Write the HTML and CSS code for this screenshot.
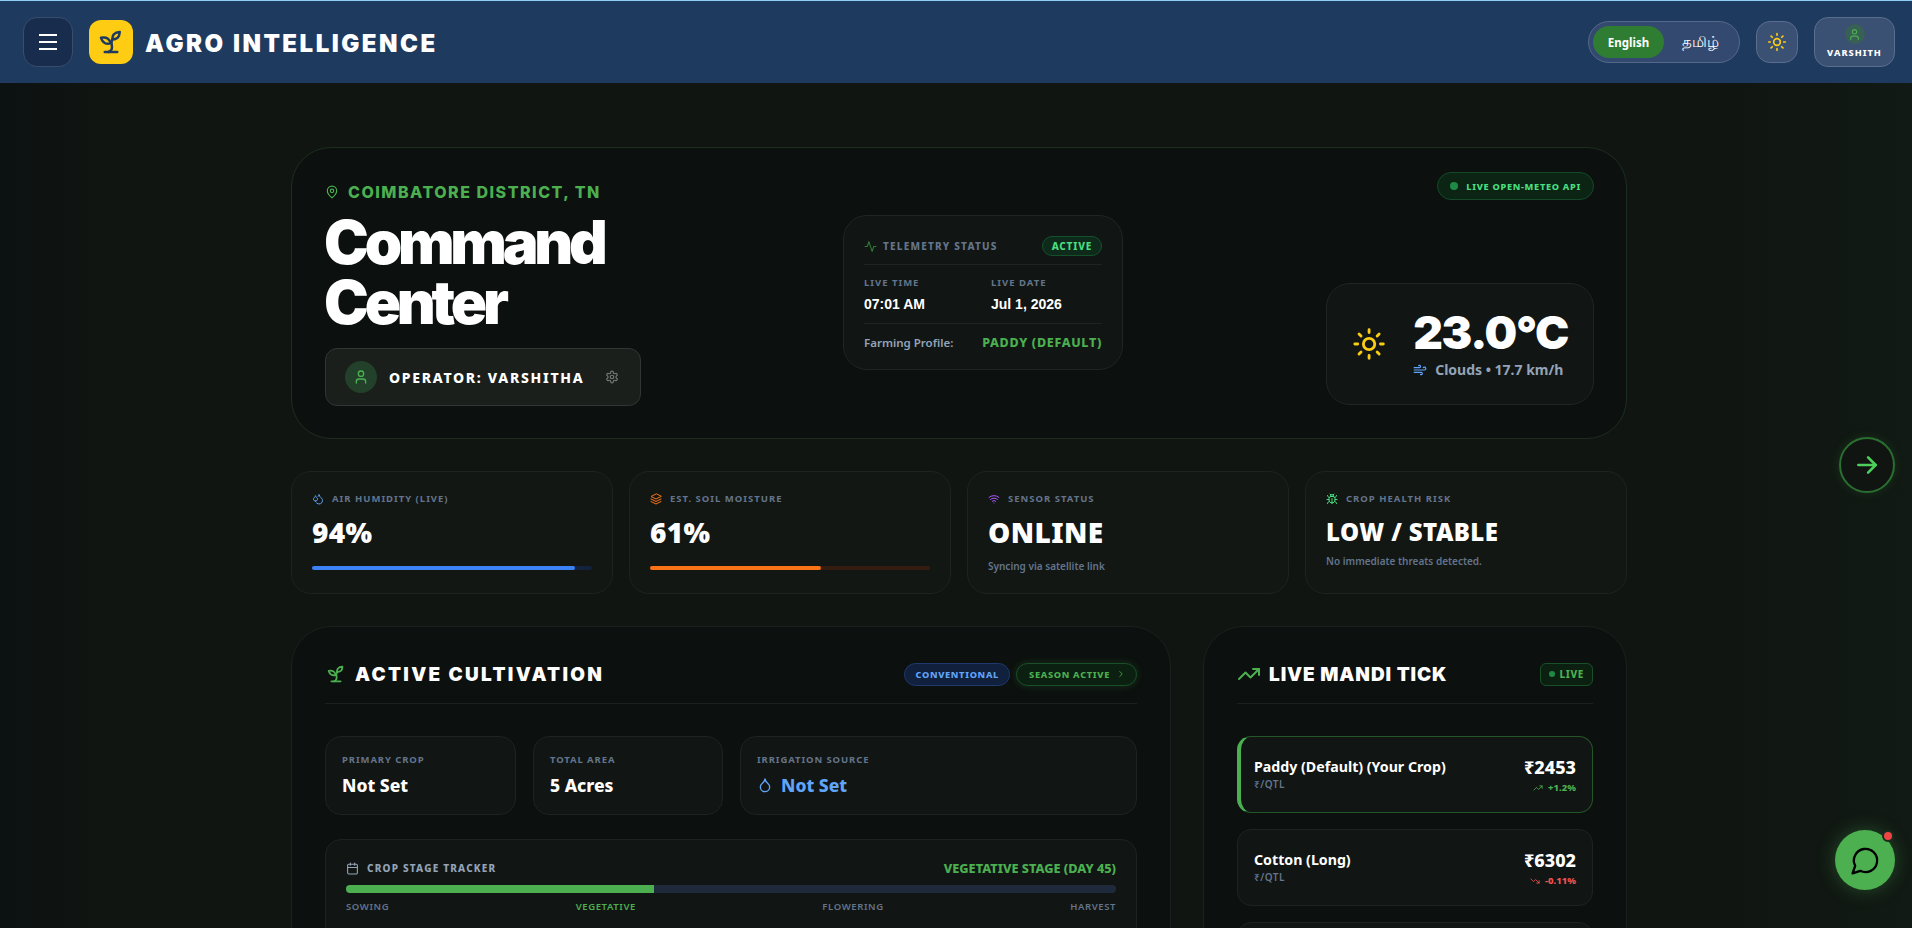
FILE: index.html
```html
<!DOCTYPE html>
<html>
<head>
  <meta charset="utf-8">
  <title>Agro Intelligence</title>
  <link rel="stylesheet" href="styles.css">
</head>
<body>
  <header class="topbar">
    <div class="brand">
      <button class="menu-btn">
        <svg width="24" height="24" viewBox="0 0 24 24" fill="none" stroke="#fff" stroke-width="2"><path d="M3 5h18M3 12h18M3 19h18"/></svg>
      </button>
      <div class="logo">
        <svg width="30" height="30" viewBox="0 0 24 24" fill="none" stroke="#1e3a5f" stroke-width="2" stroke-linecap="round" stroke-linejoin="round"><path d="M7 20h10"/><path d="M10 20c5.5-2.5.8-6.4 3-10"/><path d="M9.5 9.4c1.1.8 1.8 2.2 2.3 3.7-2 .4-3.5.4-4.8-.3-1.2-.6-2.3-1.9-3-4.2 2.8-.5 4.4 0 5.5.8z"/><path d="M14.1 6a7 7 0 0 0-1.1 4c1.9-.1 3.3-.6 4.3-1.4 1-1 1.6-2.3 1.7-4.6-2.7.1-4 1-4.9 2z"/></svg>
      </div>
      <span class="brand-name">AGRO INTELLIGENCE</span>
    </div>
    <div class="top-actions">
      <div class="lang-toggle">
        <span class="lang-item lang-on">English</span>
        <span class="lang-item lang-ta">தமிழ்</span>
      </div>
      <button class="theme-btn">
        <svg width="20" height="20" viewBox="0 0 24 24" fill="none" stroke="#facc15" stroke-width="2" stroke-linecap="round"><circle cx="12" cy="12" r="4"/><path d="M12 2v2M12 20v2M4.93 4.93l1.41 1.41M17.66 17.66l1.41 1.41M2 12h2M20 12h2M6.34 17.66l-1.41 1.41M19.07 4.93l-1.41 1.41"/></svg>
      </button>
      <div class="profile">
        <span class="profile-avatar">
          <svg width="13" height="13" viewBox="0 0 24 24" fill="none" stroke="#4caf50" stroke-width="2" stroke-linecap="round"><path d="M19 21v-2a4 4 0 0 0-4-4H9a4 4 0 0 0-4 4v2"/><circle cx="12" cy="7" r="4"/></svg>
        </span>
        <span class="profile-name">VARSHITH</span>
      </div>
    </div>
  </header>

  <main class="page">
    <section class="hero">
      <div class="hero-left">
        <div class="district">
          <svg width="14" height="16" viewBox="0 0 24 24" fill="none" stroke="#4caf50" stroke-width="2"><path d="M20 10c0 6-8 12-8 12s-8-6-8-12a8 8 0 0 1 16 0z"/><circle cx="12" cy="10" r="3"/></svg>
          COIMBATORE DISTRICT, TN
        </div>
        <h1 class="hero-title">Command<br>Center</h1>
        <div class="operator">
          <span class="operator-avatar">
            <svg width="16" height="16" viewBox="0 0 24 24" fill="none" stroke="#4caf50" stroke-width="2" stroke-linecap="round"><path d="M19 21v-2a4 4 0 0 0-4-4H9a4 4 0 0 0-4 4v2"/><circle cx="12" cy="7" r="4"/></svg>
          </span>
          <span class="operator-name">OPERATOR: VARSHITHA</span>
          <svg width="14" height="14" viewBox="0 0 24 24" fill="none" stroke="#777" stroke-width="2" stroke-linecap="round" stroke-linejoin="round"><path d="M12.22 2h-.44a2 2 0 0 0-2 2v.18a2 2 0 0 1-1 1.73l-.43.25a2 2 0 0 1-2 0l-.15-.08a2 2 0 0 0-2.73.73l-.22.38a2 2 0 0 0 .73 2.73l.15.1a2 2 0 0 1 1 1.72v.51a2 2 0 0 1-1 1.74l-.15.09a2 2 0 0 0-.73 2.73l.22.38a2 2 0 0 0 2.73.73l.15-.08a2 2 0 0 1 2 0l.43.25a2 2 0 0 1 1 1.73V20a2 2 0 0 0 2 2h.44a2 2 0 0 0 2-2v-.18a2 2 0 0 1 1-1.73l.43-.25a2 2 0 0 1 2 0l.15.08a2 2 0 0 0 2.73-.73l.22-.39a2 2 0 0 0-.73-2.73l-.15-.08a2 2 0 0 1-1-1.74v-.5a2 2 0 0 1 1-1.74l.15-.09a2 2 0 0 0 .73-2.73l-.22-.38a2 2 0 0 0-2.73-.73l-.15.08a2 2 0 0 1-2 0l-.43-.25a2 2 0 0 1-1-1.73V4a2 2 0 0 0-2-2z"/><circle cx="12" cy="12" r="3"/></svg>
        </div>
      </div>

      <div class="telemetry">
        <div class="tele-head">
          <span class="tele-title">
            <svg width="13" height="13" viewBox="0 0 24 24" fill="none" stroke="#2e7d32" stroke-width="2" stroke-linecap="round" stroke-linejoin="round"><path d="M22 12h-4l-3 9L9 3l-3 9H2"/></svg>
            TELEMETRY STATUS
          </span>
          <span class="tele-active">ACTIVE</span>
        </div>
        <div class="tele-times">
          <div>
            <div class="tele-label">LIVE TIME</div>
            <div class="tele-value">07:01 AM</div>
          </div>
          <div>
            <div class="tele-label">LIVE DATE</div>
            <div class="tele-value">Jul 1, 2026</div>
          </div>
        </div>
        <div class="tele-foot">
          <span class="tele-profile">Farming Profile:</span>
          <span class="tele-crop">PADDY (DEFAULT)</span>
        </div>
      </div>

      <div class="hero-right">
        <div class="api-pill"><span class="api-dot"></span>LIVE OPEN-METEO API</div>
        <div class="weather">
          <svg width="38" height="38" viewBox="0 0 24 24" fill="none" stroke="#facc15" stroke-width="2" stroke-linecap="round"><circle cx="12" cy="12" r="4"/><path d="M12 2v2M12 20v2M4.93 4.93l1.41 1.41M17.66 17.66l1.41 1.41M2 12h2M20 12h2M6.34 17.66l-1.41 1.41M19.07 4.93l-1.41 1.41"/></svg>
          <div>
            <div class="weather-temp">23.0°C</div>
            <div class="weather-sub">
              <svg width="14" height="14" viewBox="0 0 24 24" fill="none" stroke="#60a5fa" stroke-width="2" stroke-linecap="round"><path d="M12.8 19.6A2 2 0 1 0 14 16H2"/><path d="M17.5 8a2.5 2.5 0 1 1 2 4H2"/><path d="M9.8 4.4A2 2 0 1 1 11 8H2"/></svg>
              Clouds • 17.7 km/h
            </div>
          </div>
        </div>
      </div>
    </section>

    <section class="stats">
      <div class="stat">
        <div class="stat-label">
          <svg width="12" height="12" viewBox="0 0 24 24" fill="none" stroke="#60a5fa" stroke-width="2" stroke-linecap="round" stroke-linejoin="round"><path d="M7 16.3c2.2 0 4-1.83 4-4.05 0-1.16-.57-2.26-1.71-3.19S7.29 6.75 7 5.3c-.29 1.45-1.14 2.84-2.29 3.76S3 11.1 3 12.25c0 2.22 1.8 4.05 4 4.05z"/><path d="M12.56 6.6A11 11 0 0 0 14 3.02c.5 2.5 2 4.9 4 6.5s3 3.5 3 5.5a6.98 6.98 0 0 1-11.91 4.97"/></svg>
          AIR HUMIDITY (LIVE)
        </div>
        <div class="stat-value">94%</div>
        <div class="bar bar-blue"><div class="bar-fill" style="width:94%"></div></div>
      </div>
      <div class="stat">
        <div class="stat-label">
          <svg width="12" height="12" viewBox="0 0 24 24" fill="none" stroke="#f97316" stroke-width="2" stroke-linecap="round" stroke-linejoin="round"><path d="M12 2 2 7l10 5 10-5z"/><path d="m2 12 10 5 10-5"/><path d="m2 17 10 5 10-5"/></svg>
          EST. SOIL MOISTURE
        </div>
        <div class="stat-value">61%</div>
        <div class="bar bar-orange"><div class="bar-fill" style="width:61%"></div></div>
      </div>
      <div class="stat">
        <div class="stat-label">
          <svg width="12" height="12" viewBox="0 0 24 24" fill="none" stroke="#a855f7" stroke-width="2" stroke-linecap="round"><path d="M12 20h.01"/><path d="M2 8.82a15 15 0 0 1 20 0"/><path d="M5 12.86a10 10 0 0 1 14 0"/><path d="M8.5 16.43a5 5 0 0 1 7 0"/></svg>
          SENSOR STATUS
        </div>
        <div class="stat-value">ONLINE</div>
        <div class="stat-note">Syncing via satellite link</div>
      </div>
      <div class="stat">
        <div class="stat-label">
          <svg width="12" height="12" viewBox="0 0 24 24" fill="none" stroke="#4ade80" stroke-width="2" stroke-linecap="round" stroke-linejoin="round"><path d="m8 2 1.88 1.88M14.12 3.88 16 2"/><path d="M9 7.13v-1a3 3 0 1 1 6 0v1"/><path d="M12 20c-3.3 0-6-2.7-6-6v-3a4 4 0 0 1 4-4h4a4 4 0 0 1 4 4v3c0 3.3-2.7 6-6 6z"/><path d="M12 20v-9M6.53 9C4.6 8.8 3 7.1 3 5M6 13H2M3 21c0-2.1 1.7-3.9 3.8-4M20.97 5c0 2.1-1.6 3.8-3.5 4M22 13h-4M17.2 17c2.1.1 3.8 1.9 3.8 4"/></svg>
          CROP HEALTH RISK
        </div>
        <div class="stat-value stat-value-sm">LOW / STABLE</div>
        <div class="stat-note stat-note-up">No immediate threats detected.</div>
      </div>
    </section>

    <section class="columns">
      <div class="panel">
        <div class="panel-head">
          <h2 class="panel-title panel-title-wide">
            <svg width="22" height="26" viewBox="0 0 24 24" fill="none" stroke="#4caf50" stroke-width="2" stroke-linecap="round" stroke-linejoin="round"><path d="M7 20h10"/><path d="M10 20c5.5-2.5.8-6.4 3-10"/><path d="M9.5 9.4c1.1.8 1.8 2.2 2.3 3.7-2 .4-3.5.4-4.8-.3-1.2-.6-2.3-1.9-3-4.2 2.8-.5 4.4 0 5.5.8z"/><path d="M14.1 6a7 7 0 0 0-1.1 4c1.9-.1 3.3-.6 4.3-1.4 1-1 1.6-2.3 1.7-4.6-2.7.1-4 1-4.9 2z"/></svg>
            ACTIVE CULTIVATION
          </h2>
          <div class="panel-tags">
            <span class="tag tag-blue">CONVENTIONAL</span>
            <span class="tag tag-green">SEASON ACTIVE
              <svg width="10" height="10" viewBox="0 0 24 24" fill="none" stroke="#4caf50" stroke-width="2" stroke-linecap="round"><path d="m9 18 6-6-6-6"/></svg>
            </span>
          </div>
        </div>

        <div class="facts">
          <div class="fact">
            <div class="fact-label">PRIMARY CROP</div>
            <div class="fact-value">Not Set</div>
          </div>
          <div class="fact">
            <div class="fact-label">TOTAL AREA</div>
            <div class="fact-value">5 Acres</div>
          </div>
          <div class="fact">
            <div class="fact-label">IRRIGATION SOURCE</div>
            <div class="fact-value fact-blue">
              <svg width="16" height="16" viewBox="0 0 24 24" fill="none" stroke="#60a5fa" stroke-width="2" stroke-linejoin="round"><path d="M12 22a7 7 0 0 0 7-7c0-2-1-3.9-3-5.5s-3.5-4-4-6.5c-.5 2.5-2 4.9-4 6.5S5 13 5 15a7 7 0 0 0 7 7z"/></svg>
              Not Set
            </div>
          </div>
        </div>

        <div class="tracker">
          <div class="tracker-head">
            <span class="tracker-title">
              <svg width="13" height="13" viewBox="0 0 24 24" fill="none" stroke="#94a3b8" stroke-width="2" stroke-linecap="round"><rect x="3" y="4" width="18" height="18" rx="2"/><path d="M16 2v4M8 2v4M3 10h18"/></svg>
              CROP STAGE TRACKER
            </span>
            <span class="tracker-stage">VEGETATIVE STAGE (DAY 45)</span>
          </div>
          <div class="tracker-bar"><div class="tracker-fill" style="width:40%"></div></div>
          <div class="tracker-steps">
            <span>SOWING</span>
            <span class="step-on">VEGETATIVE</span>
            <span>FLOWERING</span>
            <span>HARVEST</span>
          </div>
        </div>
      </div>

      <div class="panel">
        <div class="panel-head">
          <h2 class="panel-title">
            <svg width="24" height="24" viewBox="0 0 24 24" fill="none" stroke="#4caf50" stroke-width="2" stroke-linecap="round" stroke-linejoin="round"><path d="M22 7 13.5 15.5l-5-5L2 17"/><path d="M16 7h6v6"/></svg>
            LIVE MANDI TICK
          </h2>
          <span class="live-tag"><span class="live-dot"></span>LIVE</span>
        </div>

        <div class="ticks">
          <div class="tick tick-own">
            <div>
              <div class="tick-name">Paddy (Default) (Your Crop)</div>
              <div class="tick-unit">₹/QTL</div>
            </div>
            <div class="tick-right">
              <div class="tick-price">₹2453</div>
              <div class="tick-change up">
                <svg width="10" height="10" viewBox="0 0 24 24" fill="none" stroke="#4caf50" stroke-width="2" stroke-linecap="round" stroke-linejoin="round"><path d="M22 7 13.5 15.5l-5-5L2 17"/><path d="M16 7h6v6"/></svg>
                +1.2%
              </div>
            </div>
          </div>
          <div class="tick">
            <div>
              <div class="tick-name">Cotton (Long)</div>
              <div class="tick-unit">₹/QTL</div>
            </div>
            <div class="tick-right">
              <div class="tick-price">₹6302</div>
              <div class="tick-change down">
                <svg width="10" height="10" viewBox="0 0 24 24" fill="none" stroke="#ef5350" stroke-width="2" stroke-linecap="round" stroke-linejoin="round"><path d="M22 17l-8.5-8.5-5 5L2 7"/><path d="M16 17h6v-6"/></svg>
                -0.11%
              </div>
            </div>
          </div>
          <div class="tick tick-empty"></div>
        </div>
      </div>
    </section>
  </main>

  <button class="next-btn">
    <svg width="26" height="26" viewBox="0 0 24 24" fill="none" stroke="#4cd05a" stroke-width="2.4" stroke-linecap="round" stroke-linejoin="round"><path d="M4 12h16"/><path d="m13 5 7 7-7 7"/></svg>
  </button>
  <button class="chat-btn">
    <svg width="31" height="31" viewBox="0 0 24 24" fill="none" stroke="#000" stroke-width="1.8" stroke-linecap="round" stroke-linejoin="round"><path d="M7.9 20A9 9 0 1 0 4 16.1L2 22z"/></svg>
    <span class="chat-dot"></span>
  </button>
</body>
</html>
```

FILE: styles.css
```css
* {
  box-sizing: border-box;
}

html, body {
  margin: 0;
  height: 928px;
  overflow: hidden;
}

body {
  background: linear-gradient(90deg, #0c1212, #101511 6%, #101511 90%, #111a14);
  color: #fff;
  font-family: "Noto Sans", "Open Sans", sans-serif;
}

button {
  font: inherit;
  cursor: pointer;
}

/* top bar */
.topbar {
  height: 83px;
  display: flex;
  align-items: center;
  justify-content: space-between;
  padding: 0 17px 0 23px;
  background: #1e3a5f;
  border-top: 1px solid #90cdf4;
}

.brand {
  display: flex;
  align-items: center;
}

.menu-btn {
  width: 50px;
  height: 50px;
  display: flex;
  align-items: center;
  justify-content: center;
  margin-right: 16px;
  background: #182d4e;
  border: 1px solid #3a4d6b;
  border-radius: 14px;
  padding: 0;
}

.logo {
  width: 44px;
  height: 44px;
  display: flex;
  align-items: center;
  justify-content: center;
  margin-right: 12px;
  background: #fdcc13;
  border-radius: 12px;
}

.brand-name {
  padding-top: 2px;
  font-family: Inter, sans-serif;
  font-weight: 900;
  font-size: 24px;
  letter-spacing: 2.5px;
  white-space: nowrap;
}

.top-actions {
  display: flex;
  align-items: center;
  gap: 16px;
}

.lang-toggle {
  width: 152px;
  height: 42px;
  display: flex;
  align-items: center;
  padding: 0 4px;
  background: #34496f;
  border: 1px solid #54688a;
  border-radius: 21px;
}

.lang-item {
  width: 72px;
  height: 32px;
  display: flex;
  align-items: center;
  justify-content: center;
  font-size: 11.5px;
  font-weight: 700;
}

.lang-ta {
  font-size: 15px;
  font-weight: 500;
  padding-left: 2px;
}

.lang-on {
  background: #2e7d32;
  border-radius: 16px;
}

.theme-btn {
  width: 42px;
  height: 42px;
  display: flex;
  align-items: center;
  justify-content: center;
  padding: 0;
  background: #3b5173;
  border: 1px solid #596d8e;
  border-radius: 14px;
}

.profile {
  width: 81px;
  height: 50px;
  display: flex;
  flex-direction: column;
  align-items: center;
  justify-content: center;
  gap: 2px;
  background: #3b5173;
  border: 1px solid #596d8e;
  border-radius: 14px;
}

.profile-avatar {
  width: 20px;
  height: 20px;
  display: flex;
  align-items: center;
  justify-content: center;
  background: #386054;
  border-radius: 50%;
}

.profile-name {
  font-size: 9.2px;
  font-weight: 800;
  letter-spacing: 1px;
  line-height: 14px;
}

/* page */
.page {
  padding: 64px 285px 0 291px;
}

.hero {
  height: 292px;
  position: relative;
  display: flex;
  padding: 33px 32px 33px 33px;
  background: #0c100e;
  border: 1px solid #1c2e20;
  border-radius: 40px;
}

.hero-left {
  width: 518px;
}

.district {
  display: flex;
  align-items: center;
  gap: 9px;
  margin-top: 1px;
  font-family: Inter, sans-serif;
  font-weight: 800;
  font-size: 16px;
  letter-spacing: 1.5px;
  color: #4caf50;
  line-height: 20px;
}

.hero-title {
  margin: 10px 0 16px;
  margin-left: -1px;
  font-family: Inter, sans-serif;
  font-weight: 900;
  font-size: 60px;
  line-height: 60px;
  letter-spacing: -4.2px;
}

.operator {
  width: 316px;
  height: 58px;
  display: flex;
  align-items: center;
  padding: 0 19px;
  background: #1a1f1c;
  border: 1px solid #303633;
  border-radius: 12px;
}

.operator-avatar {
  width: 32px;
  height: 32px;
  display: flex;
  align-items: center;
  justify-content: center;
  margin-right: 12px;
  background: #22402a;
  border-radius: 50%;
}

.operator-name {
  margin-right: 21px;
  font-size: 14px;
  font-weight: 800;
  letter-spacing: 1.7px;
  white-space: nowrap;
}

.telemetry {
  width: 280px;
  height: 155px;
  margin-top: 34px;
  padding: 20px;
  background: #111614;
  border: 1px solid #1f2522;
  border-radius: 24px;
}

.tele-head {
  display: flex;
  align-items: center;
  justify-content: space-between;
  padding-bottom: 8px;
  border-bottom: 1px solid #1e2421;
}

.tele-title {
  display: flex;
  align-items: center;
  gap: 6px;
  font-size: 10px;
  font-weight: 800;
  letter-spacing: 1.2px;
  color: #64748b;
}

.tele-active {
  padding: 2px 9px;
  font-size: 10px;
  font-weight: 800;
  letter-spacing: .8px;
  color: #4ade80;
  background: #0e2a1a;
  border: 1px solid #15502c;
  border-radius: 12px;
}

.tele-times {
  display: grid;
  grid-template-columns: 127px 1fr;
  padding: 11px 0 11px;
  border-bottom: 1px solid #1e2421;
}

.tele-label {
  font-size: 9.5px;
  font-weight: 700;
  letter-spacing: 1px;
  color: #64748b;
  line-height: 14px;
}

.tele-value {
  margin-top: 6px;
  font-family: "Liberation Sans", sans-serif;
  font-size: 14px;
  font-weight: 700;
  line-height: 16px;
}

.tele-foot {
  display: flex;
  align-items: center;
  justify-content: space-between;
  padding-top: 10px;
}

.tele-profile {
  font-size: 11.5px;
  font-weight: 600;
  color: #94a3b8;
}

.tele-crop {
  font-size: 12.5px;
  font-weight: 800;
  letter-spacing: .7px;
  color: #4caf50;
}

.hero-right {
  flex: 1;
  display: flex;
  flex-direction: column;
  align-items: flex-end;
  justify-content: space-between;
  margin: -9px 0 0;
}

.api-pill {
  height: 28px;
  display: flex;
  align-items: center;
  gap: 8px;
  padding: 0 12px;
  font-size: 9.2px;
  font-weight: 800;
  letter-spacing: .7px;
  color: #4ade80;
  background: #0b2414;
  border: 1px solid #14492a;
  border-radius: 14px;
}

.api-dot {
  width: 8px;
  height: 8px;
  background: #1f8a46;
  border-radius: 50%;
}

.weather {
  width: 268px;
  height: 122px;
  display: flex;
  align-items: center;
  gap: 27px;
  padding: 0 25px;
  background: #111614;
  border: 1px solid #1f2522;
  border-radius: 24px;
}

.weather-temp {
  margin-top: -2px;
  font-family: Inter, sans-serif;
  font-weight: 900;
  font-size: 46px;
  line-height: 50px;
  letter-spacing: -1.3px;
  white-space: nowrap;
}

.weather-sub {
  display: flex;
  align-items: center;
  gap: 8px;
  margin-top: 3px;
  font-size: 14px;
  font-weight: 700;
  color: #94a3b8;
  white-space: nowrap;
}

/* stat cards */
.stats {
  display: grid;
  grid-template-columns: repeat(4, 1fr);
  gap: 16px;
  margin-top: 32px;
}

.stat {
  height: 123px;
  padding: 20px;
  background: #121714;
  border: 1px solid #1d2320;
  border-radius: 20px;
}

.stat-label {
  display: flex;
  align-items: center;
  gap: 8px;
  font-size: 9.5px;
  font-weight: 700;
  letter-spacing: 1px;
  color: #64748b;
  line-height: 14px;
}

.stat-value {
  margin-top: 7px;
  font-size: 28px;
  font-weight: 900;
  line-height: 38px;
  letter-spacing: .4px;
}

.stat-value-sm {
  font-size: 24px;
}

.stat-note {
  margin-top: 8px;
  font-size: 10px;
  font-weight: 600;
  color: #64748b;
}

.stat-note-up {
  margin-top: 3px;
}

.bar {
  height: 4px;
  margin-top: 15px;
  border-radius: 2px;
}

.bar-fill {
  height: 100%;
  border-radius: 2px;
}

.bar-blue {
  background: #13233d;
}

.bar-blue .bar-fill {
  background: #3b82f6;
}

.bar-orange {
  background: #351c10;
}

.bar-orange .bar-fill {
  background: #f97316;
}

/* lower panels */
.columns {
  display: grid;
  grid-template-columns: 880px 1fr;
  gap: 32px;
  margin-top: 32px;
}

.panel {
  padding: 30px 33px 33px;
  background: #0c100e;
  border: 1px solid #1a201d;
  border-radius: 40px;
}

.panel-head {
  height: 47px;
  display: flex;
  align-items: center;
  justify-content: space-between;
  padding-bottom: 12px;
  border-bottom: 1px solid #1b211e;
}

.panel-title {
  display: flex;
  align-items: center;
  gap: 8px;
  margin: 0;
  font-family: Inter, sans-serif;
  font-size: 19px;
  font-weight: 900;
  letter-spacing: .9px;
}

.panel-title-wide {
  letter-spacing: 2.3px;
}

.panel-tags {
  display: flex;
  gap: 6px;
}

.tag {
  height: 23px;
  display: flex;
  align-items: center;
  gap: 6px;
  padding: 0 10px;
  font-size: 9.2px;
  font-weight: 800;
  letter-spacing: .7px;
  border-radius: 12px;
}

.tag-blue {
  color: #60a5fa;
  background: #10203d;
  border: 1px solid #1e3a6e;
}

.tag-green {
  padding-left: 12px;
  color: #4caf50;
  background: #0c2012;
  border: 1px solid #1a5027;
  box-shadow: 0 0 8px rgba(76,175,80,.2);
}

.facts {
  display: grid;
  grid-template-columns: 191px 190px 1fr;
  gap: 17px;
  margin-top: 32px;
}

.fact {
  height: 79px;
  padding: 16px;
  background: #111614;
  border: 1px solid #1d2320;
  border-radius: 16px;
}

.fact-label {
  font-size: 9.5px;
  font-weight: 700;
  letter-spacing: .9px;
  color: #64748b;
  line-height: 14px;
}

.fact-value {
  display: flex;
  align-items: center;
  gap: 8px;
  margin-top: 6px;
  font-size: 17.5px;
  font-weight: 800;
  line-height: 24px;
}

.fact-blue {
  color: #60a5fa;
}

.tracker {
  margin-top: 24px;
  height: 130px;
  padding: 19px 20px;
  background: #111614;
  border: 1px solid #1d2320;
  border-radius: 16px;
}

.tracker-head {
  display: flex;
  align-items: center;
  justify-content: space-between;
}

.tracker-title {
  display: flex;
  align-items: center;
  gap: 8px;
  font-size: 10px;
  font-weight: 800;
  letter-spacing: 1.2px;
  color: #94a3b8;
}

.tracker-stage {
  font-size: 12.7px;
  font-weight: 800;
  color: #4caf50;
}

.tracker-bar {
  height: 8px;
  margin-top: 8px;
  background: #1e293b;
  border-radius: 4px;
  overflow: hidden;
}

.tracker-fill {
  height: 100%;
  background: #4caf50;
}

.tracker-steps {
  display: flex;
  justify-content: space-between;
  margin-top: 7px;
  font-size: 9.5px;
  font-weight: 600;
  letter-spacing: .6px;
  color: #64748b;
}

.step-on {
  color: #4caf50;
}

.live-tag {
  height: 23px;
  display: flex;
  align-items: center;
  gap: 5px;
  padding: 0 8px;
  font-size: 10px;
  font-weight: 800;
  letter-spacing: .6px;
  color: #4caf50;
  background: #0c2012;
  border: 1px solid #1a5027;
  border-radius: 6px;
}

.live-dot {
  width: 6px;
  height: 6px;
  background: #1f8a46;
  border-radius: 50%;
}

.ticks {
  display: flex;
  flex-direction: column;
  gap: 16px;
  margin-top: 32px;
}

.tick {
  height: 77px;
  display: flex;
  align-items: center;
  justify-content: space-between;
  padding: 0 16px 2px;
  background: #111614;
  border: 1px solid #1d2320;
  border-radius: 14px;
}

.tick-own {
  border-color: #25562a;
  border-left: 4px solid #4caf50;
  padding-left: 13px;
}

.tick-name {
  font-size: 14.2px;
  font-weight: 700;
  line-height: 20px;
}

.tick-unit {
  font-size: 10px;
  font-weight: 600;
  color: #64748b;
  letter-spacing: .5px;
}

.tick-right {
  display: flex;
  flex-direction: column;
  align-items: flex-end;
}

.tick-price {
  font-size: 18px;
  font-weight: 800;
  line-height: 28px;
}

.tick-change {
  display: flex;
  align-items: center;
  gap: 5px;
  font-size: 9.5px;
  font-weight: 800;
}

.up {
  color: #4caf50;
}

.down {
  color: #ef5350;
}

/* floating buttons */
.next-btn {
  position: fixed;
  left: 1839px;
  top: 437px;
  width: 56px;
  height: 56px;
  display: flex;
  align-items: center;
  justify-content: center;
  padding: 0;
  background: #111512;
  border: 2px solid #2a6e30;
  border-radius: 50%;
  box-shadow: 0 0 10px rgba(46,125,50,.25);
}

.chat-btn {
  position: fixed;
  left: 1835px;
  top: 830px;
  width: 60px;
  height: 60px;
  display: flex;
  align-items: center;
  justify-content: center;
  padding: 0;
  background: #4caf50;
  border: 0;
  border-radius: 50%;
  box-shadow: 0 0 18px rgba(76,175,80,.35);
}

.chat-dot {
  position: absolute;
  top: 0;
  right: 1px;
  width: 12px;
  height: 12px;
  background: #ef4444;
  border: 2px solid #1a2a1e;
  border-radius: 50%;
}
```
